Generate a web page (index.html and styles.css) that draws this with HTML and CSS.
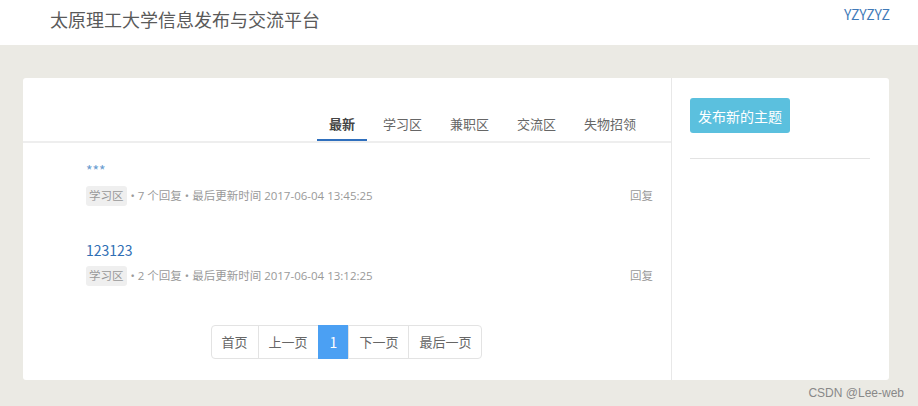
FILE: index.html
```html
<!DOCTYPE html>
<html lang="zh-CN">
<head>
  <meta charset="UTF-8">
  <title>太原理工大学信息发布与交流平台</title>
  <link rel="stylesheet" href="styles.css">
</head>
<body>

<header class="header">
  <div class="brand">太原理工大学信息发布与交流平台</div>
  <a class="user" href="#">YZYZYZ</a>
</header>

<div class="card">
  <div class="main">
    <ul class="tabs">
      <li class="active">最新</li>
      <li>学习区</li>
      <li>兼职区</li>
      <li>交流区</li>
      <li>失物招领</li>
    </ul>

    <div class="topic">
      <a class="topic-title light" href="#">***</a>
      <div class="topic-meta">
        <span><span class="tag">学习区</span> • 7 个回复 • 最后更新时间 2017-06-04 13:45:25</span>
        <span class="reply">回复</span>
      </div>
    </div>

    <div class="topic">
      <a class="topic-title" href="#">123123</a>
      <div class="topic-meta">
        <span><span class="tag">学习区</span> • 2 个回复 • 最后更新时间 2017-06-04 13:12:25</span>
        <span class="reply">回复</span>
      </div>
    </div>

    <div class="pager">
      <a href="#">首页</a>
      <a href="#">上一页</a>
      <a href="#" class="current">1</a>
      <a href="#">下一页</a>
      <a href="#">最后一页</a>
    </div>
  </div>

  <div class="side">
    <button class="btn-new">发布新的主题</button>
    <hr>
  </div>
</div>

<div class="watermark">CSDN @Lee-web</div>

</body>
</html>
```

FILE: styles.css
```css
* {
  box-sizing: border-box;
  margin: 0;
  padding: 0;
}
body {
  background: #ebeae4;
  font-family: "Noto Sans CJK SC", "Noto Sans", sans-serif;
  color: #555;
  height: 406px;
  overflow: hidden;
}
a {
  text-decoration: none;
}

.header {
  background: #fff;
  height: 45px;
  display: flex;
  justify-content: space-between;
  padding: 0 28px 0 50px;
}
.brand {
  font-size: 18px;
  line-height: 38px;
  color: #5a5a5a;
}
.user {
  font-size: 14px;
  line-height: 28px;
  color: #3f7ab8;
}

.card {
  display: flex;
  background: #fff;
  border-radius: 3px;
  margin: 33px 29px 0 23px;
  height: 302px;
}

.main {
  width: 648px;
}
.tabs {
  list-style: none;
  display: flex;
  justify-content: flex-end;
  gap: 4px;
  padding: 30px 23px 0 0;
  border-bottom: 2px solid #eee;
}
.tabs li {
  font-size: 13px;
  line-height: 20px;
  padding: 6px 12px 5px;
  border-bottom: 2px solid transparent;
  color: #666;
}
.tabs li.active {
  border-bottom-color: #2f6fbd;
  color: #444;
  font-weight: bold;
}

.topic {
  padding: 17px 18px 17px 63px;
}
.topic-title {
  display: block;
  font-size: 14px;
  line-height: 20px;
  color: #2f6fb5;
}
.topic-title.light {
  color: #6a9ccf;
}
.topic-meta {
  display: flex;
  justify-content: space-between;
  margin-top: 6px;
  font-family: "Open Sans", "Noto Sans CJK SC", sans-serif;
  font-size: 11.5px;
  line-height: 20px;
  color: #999;
}
.tag {
  display: inline-block;
  background: #efefef;
  color: #999;
  border-radius: 3px;
  padding: 0 3px;
  margin-right: 1px;
}
.reply {
  color: #999;
}

.pager {
  display: flex;
  justify-content: center;
  margin-top: 22px;
}
.pager a {
  font-size: 13px;
  line-height: 32px;
  padding: 0 10px;
  color: #666;
  border: 1px solid #e3e3e3;
  margin-left: -1px;
}
.pager a:first-child {
  border-radius: 4px 0 0 4px;
}
.pager a:last-child {
  border-radius: 0 4px 4px 0;
}
.pager a.current {
  font-size: 14px;
  padding: 0 11px;
  background: #4ba0f3;
  border-color: #4ba0f3;
  color: #fff;
}

.side {
  flex: 1;
  border-left: 1px solid #e8e8e8;
  padding: 20px 19px 0 18px;
}
.btn-new {
  font-family: inherit;
  font-size: 14px;
  color: #fff;
  background: #5bc0de;
  border: none;
  border-radius: 3px;
  height: 35px;
  padding: 0 8px;
}
.side hr {
  border: none;
  border-top: 1px solid #e3e3e3;
  margin-top: 25px;
}

.watermark {
  position: absolute;
  right: 14px;
  bottom: 6px;
  font-family: "Liberation Sans", sans-serif;
  font-size: 12px;
  color: #888;
}
```
